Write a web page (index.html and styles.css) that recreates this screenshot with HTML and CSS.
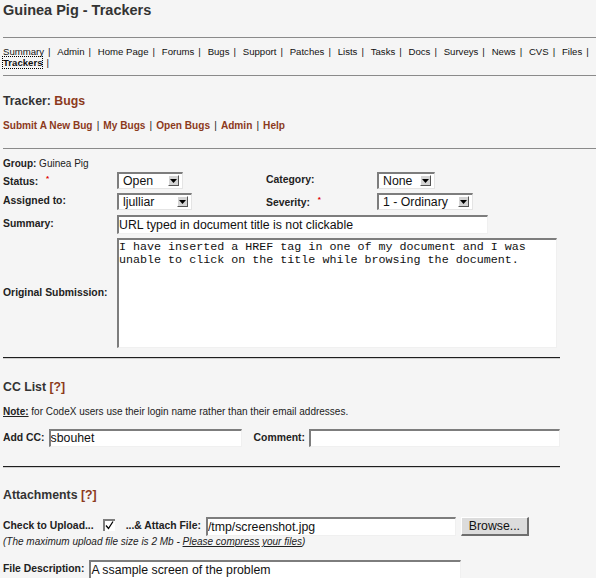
FILE: index.html
```html
<!DOCTYPE html>
<html lang="en">
<head>
<meta charset="utf-8">
<title>Guinea Pig - Trackers</title>
<link rel="stylesheet" href="styles.css">
</head>
<body>
<h1 class="page-title">Guinea Pig - Trackers</h1>

<nav class="project-nav">
  <span class="nav-item"><a href="#">Summary</a><span class="sep">|</span></span>
  <span class="nav-item"><a href="#">Admin</a><span class="sep">|</span></span>
  <span class="nav-item"><a href="#">Home Page</a><span class="sep">|</span></span>
  <span class="nav-item"><a href="#">Forums</a><span class="sep">|</span></span>
  <span class="nav-item"><a href="#">Bugs</a><span class="sep">|</span></span>
  <span class="nav-item"><a href="#">Support</a><span class="sep">|</span></span>
  <span class="nav-item"><a href="#">Patches</a><span class="sep">|</span></span>
  <span class="nav-item"><a href="#">Lists</a><span class="sep">|</span></span>
  <span class="nav-item"><a href="#">Tasks</a><span class="sep">|</span></span>
  <span class="nav-item"><a href="#">Docs</a><span class="sep">|</span></span>
  <span class="nav-item"><a href="#">Surveys</a><span class="sep">|</span></span>
  <span class="nav-item"><a href="#">News</a><span class="sep">|</span></span>
  <span class="nav-item"><a href="#">CVS</a><span class="sep">|</span></span>
  <span class="nav-item"><a href="#">Files</a><span class="sep">|</span></span>
  <span class="nav-item"><a href="#" class="current">Trackers</a><span class="sep">|</span></span>
</nav>

<section class="tracker-head">
  <h2 class="tracker-title">Tracker: <a href="#" class="brown">Bugs</a></h2>
  <div class="tracker-links">
    <a href="#">Submit A New Bug</a><span class="bar">|</span>
    <a href="#">My Bugs</a><span class="bar">|</span>
    <a href="#">Open Bugs</a><span class="bar">|</span>
    <a href="#">Admin</a><span class="bar">|</span>
    <a href="#">Help</a>
  </div>
</section>

<form class="bug-form">
  <div class="group-line"><b>Group:</b> Guinea Pig</div>

  <div class="field-grid">
    <label class="lbl">Status: <span class="req">*</span></label>
    <div class="select sel-status"><span class="value">Open</span><span class="arrow"><svg width="7" height="4" viewBox="0 0 7 4"><polygon points="0,0 7,0 3.5,4" fill="#000"/></svg></span></div>
    <label class="lbl">Category:</label>
    <div class="select sel-category"><span class="value">None</span><span class="arrow"><svg width="7" height="4" viewBox="0 0 7 4"><polygon points="0,0 7,0 3.5,4" fill="#000"/></svg></span></div>

    <label class="lbl">Assigned to:</label>
    <div class="select sel-assigned"><span class="value">ljulliar</span><span class="arrow"><svg width="7" height="4" viewBox="0 0 7 4"><polygon points="0,0 7,0 3.5,4" fill="#000"/></svg></span></div>
    <label class="lbl">Severity: <span class="req">*</span></label>
    <div class="select sel-severity"><span class="value">1 - Ordinary</span><span class="arrow"><svg width="7" height="4" viewBox="0 0 7 4"><polygon points="0,0 7,0 3.5,4" fill="#000"/></svg></span></div>

    <label class="lbl">Summary:</label>
    <input class="field summary-input" type="text" value="URL typed in document title is not clickable">

    <label class="lbl">Original Submission:</label>
    <textarea class="field submission">I have inserted a HREF tag in one of my document and I was
unable to click on the title while browsing the document.</textarea>
  </div>

  <div class="divider"></div>

  <h3 class="section-title">CC List <a href="#" class="brown">[?]</a></h3>
  <p class="note"><b class="note-tag">Note:</b> for CodeX users use their login name rather than their email addresses.</p>
  <div class="cc-row">
    <label class="lbl">Add CC:</label>
    <input class="field cc-input" type="text" value="sbouhet">
    <label class="lbl comment-lbl">Comment:</label>
    <input class="field comment-input" type="text" value="">
  </div>

  <div class="divider divider-2"></div>

  <h3 class="section-title attach-title">Attachments <a href="#" class="brown">[?]</a></h3>
  <div class="upload-row">
    <label class="lbl">Check to Upload...</label>
    <span class="checkbox"><svg width="9" height="9" viewBox="0 0 9 9"><polyline points="1,4.5 3.5,7.5 8,0.5" fill="none" stroke="#000" stroke-width="1.3"/></svg></span>
    <label class="lbl attach-lbl">...&amp; Attach File:</label>
    <input class="field file-input" type="text" value="/tmp/screenshot.jpg">
    <button type="button" class="browse">Browse...</button>
  </div>
  <p class="upload-note">(The maximum upload file size is 2 Mb - <a href="#" class="underline">Please compress your files</a>)</p>
  <div class="desc-row">
    <label class="lbl">File Description:</label>
    <input class="field desc-input" type="text" value="A ssample screen of the problem">
  </div>
</form>
</body>
</html>
```

FILE: styles.css
```css
* { box-sizing: border-box; }

html { overflow: hidden; }

body {
  margin: 0;
  padding: 0 0 0 3px;
  background: #f5f5f5;
  color: #222;
  font-family: "Liberation Sans", Arial, sans-serif;
  font-size: 10px;
  line-height: 12px;
}

a { color: inherit; text-decoration: none; }
.brown { color: #8c3a1c; }
.underline { text-decoration: underline; }

.page-title {
  margin: 0;
  padding: 1.5px 0 18.5px;
  font-size: 14.5px;
  line-height: 17px;
  font-weight: bold;
  color: #333;
}

.project-nav {
  display: flex;
  flex-wrap: wrap;
  column-gap: 6.8px;
  padding: 8.2px 0 6.8px;
  border-top: 1px solid #8a8a8a;
  border-bottom: 1px solid #8a8a8a;
  font-size: 9.6px;
  line-height: 11px;
  color: #111;
}
.nav-item { white-space: nowrap; }
.sep { margin-left: 4px; }
.current { font-weight: bold; outline: 1px dotted #000; outline-offset: 0; }

.tracker-head {
  padding-bottom: 15.5px;
  border-bottom: 1px solid #8a8a8a;
}
.tracker-title {
  margin: 18px 0 0;
  font-size: 12.3px;
  line-height: 15px;
  font-weight: bold;
  color: #333;
}
.tracker-links {
  display: flex;
  gap: 4.1px;
  margin-top: 11.5px;
  font-size: 10.1px;
  line-height: 12px;
  font-weight: bold;
  color: #8c3a1c;
}
.tracker-links .bar { color: #222; font-weight: normal; }

.group-line { margin-top: 9px; }

.lbl {
  font-weight: bold;
  font-size: 10.4px;
  white-space: nowrap;
}
.req {
  color: #e00000;
  font-size: 8px;
  vertical-align: 4px;
  margin-left: 5px;
}

.field-grid {
  display: grid;
  grid-template-columns: 114px 149px 111px auto;
  row-gap: 4px;
  margin-top: 2px;
  align-items: center;
}

.select {
  display: flex;
  align-items: center;
  justify-self: start;
  height: 17px;
  padding: 0 3px 0 4px;
  background: #fff;
  border-style: solid;
  border-width: 2px 1px 1px 2px;
  border-color: #7d7d7d #e4e4e4 #e4e4e4 #7d7d7d;
  font-size: 12.3px;
  color: #111;
}
.select .value { flex: 1; white-space: nowrap; }
.arrow {
  display: flex;
  align-items: center;
  justify-content: center;
  width: 11px;
  height: 11px;
  background: #d4d4d4;
  border-style: solid;
  border-width: 1px;
  border-color: #fff #555 #555 #fff;
}
.sel-status { width: 66px; }
.sel-category { width: 58px; }
.sel-assigned { width: 75px; }
.sel-severity { width: 96px; }

.field {
  display: block;
  margin: 0;
  padding: 0 1px 0 0;
  background: #fff;
  border-style: solid;
  border-width: 2px 1px 1px 2px;
  border-color: #7d7d7d #f0f0f0 #f0f0f0 #7d7d7d;
  font-family: "Liberation Sans", Arial, sans-serif;
  font-size: 12.3px;
  color: #111;
  outline: none;
}
.summary-input {
  grid-column: 2 / span 3;
  width: 371px;
  height: 19px;
  margin-top: 1px;
}
.submission {
  grid-column: 2 / span 3;
  width: 440px;
  height: 110px;
  resize: none;
  padding: 1px 0 0 0;
  font-family: "Liberation Mono", "Courier New", monospace;
  font-size: 11.7px;
  line-height: 13px;
  overflow: hidden;
}

.divider {
  width: 557px;
  height: 2px;
  margin-top: 9px;
  border-top: 1px solid #1e1e1e;
  border-bottom: 1px solid #cfcfcf;
}
.divider-2 { margin-top: 19px; }

.section-title {
  margin: 21px 0 0;
  font-size: 12.3px;
  line-height: 15px;
  font-weight: bold;
  color: #333;
}
.attach-title { margin-top: 20px; }

.note { margin: 11.5px 0 0; }
.note-tag { text-decoration: underline; }

.cc-row {
  display: flex;
  align-items: center;
  margin-top: 10.5px;
}
.cc-input { margin-left: 4px; width: 193px; height: 18px; }
.comment-lbl { margin-left: 12px; }
.comment-input { margin-left: 4px; width: 251px; height: 18px; }

.upload-row {
  display: flex;
  align-items: center;
  margin-top: 14px;
}
.checkbox {
  display: flex;
  align-items: center;
  justify-content: center;
  width: 12px;
  height: 12px;
  margin: -3px 0 0 9px;
  background: #fff;
  border-style: solid;
  border-width: 2px 0 0 2px;
  border-color: #7d7d7d;
}
.attach-lbl { margin-left: 11px; }
.file-input { margin-left: 5px; width: 250px; height: 19px; }
.browse {
  margin-left: 5px;
  width: 68px;
  height: 19px;
  padding: 0;
  background: #dcdcdc;
  border-style: solid;
  border-width: 1px 2px 2px 1px;
  border-color: #fff #6e6e6e #6e6e6e #fff;
  font-family: "Liberation Sans", Arial, sans-serif;
  font-size: 12.3px;
  color: #111;
}

.upload-note {
  margin: 0.5px 0 0;
  font-style: italic;
  color: #222;
}

.desc-row {
  display: flex;
  align-items: center;
  margin-top: 11.5px;
}
.desc-input { margin-left: 5px; width: 372px; height: 19px; }
```
